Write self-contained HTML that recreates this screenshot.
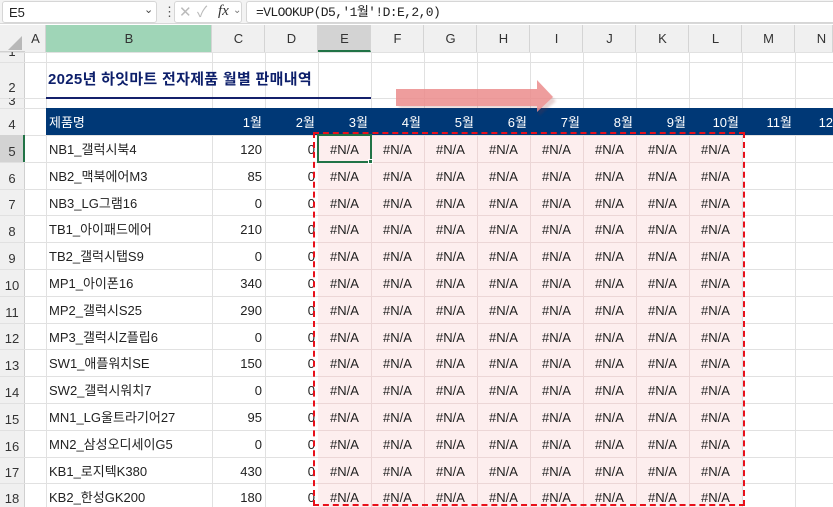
<!DOCTYPE html>
<html><head><meta charset="utf-8"><style>
*{margin:0;padding:0;box-sizing:border-box}
html,body{width:833px;height:507px;overflow:hidden}
body{background:#fff;font-family:"Liberation Sans","Noto Sans CJK KR",sans-serif;position:relative}
.a{position:absolute}
.t{position:absolute;font-size:13px;color:#222;white-space:nowrap;line-height:1}
</style></head><body>
<div class="a" style="left:0;top:0;width:833px;height:24px;background:#f3f3f3;border-bottom:1px solid #d8d8d8"></div>
<div class="a" style="left:2px;top:1px;width:155px;height:22px;background:#fff;border:1px solid #d6d6d6;border-radius:3px"></div>
<div class="t" style="left:9px;top:6px;font-size:13px">E5</div>
<div class="t" style="left:144px;top:5px;font-size:11px;color:#444">&#8964;</div>
<div class="t" style="left:163px;top:5px;font-size:13px;color:#555">&#8942;</div>
<div class="a" style="left:174px;top:1px;width:68px;height:22px;background:#fff;border:1px solid #d6d6d6;border-radius:3px"></div>
<div class="t" style="left:179px;top:5px;font-size:15px;color:#bbb">&#10005;</div>
<div class="t" style="left:197px;top:5px;font-size:15px;color:#bbb">&#10003;</div>
<div class="t" style="left:218px;top:4px;font-size:15px;font-style:italic;font-family:'Liberation Serif',serif;color:#333">fx</div>
<div class="t" style="left:233px;top:6px;font-size:10px;color:#777">&#8964;</div>
<div class="a" style="left:246px;top:1px;width:587px;height:22px;background:#fff;border:1px solid #d6d6d6;border-right:none;border-radius:3px 0 0 3px"></div>
<div class="t" style="left:256px;top:6px;font-size:13px;font-family:'Liberation Mono','Noto Sans CJK KR',monospace;letter-spacing:-0.6px">=VLOOKUP(D5,'1월'!D:E,2,0)</div>
<div id="g" style="position:absolute;left:0;top:0;width:833px;height:507px;overflow:hidden"></div>
<script>
(function(){
var g=document.getElementById('g'),h='';
var cx=[25,46,212,265,318,371,424,477,530,583,636,689,742,795,833];
var cn=['A','B','C','D','E','F','G','H','I','J','K','L','M','N'];
h+='<div class="a" style="left:0;top:25px;width:833px;height:27px;background:#f0f0f0;border-bottom:1px solid #d0d0d0"></div>';
h+='<div class="a" style="left:8px;top:36px;width:0;height:0;border-left:14px solid transparent;border-bottom:14px solid #b8b8b8"></div>';
for(var i=0;i<14;i++){var bg=i==1?'#9fd5b7':(i==4?'#d3d3d3':'#f0f0f0');var w=(i==13?53:cx[i+1]-cx[i]);
h+='<div class="a" style="left:'+cx[i]+'px;top:25px;width:'+(cx[i+1]-cx[i])+'px;height:27px;background:'+bg+';border-right:1px solid #d4d4d4;'+(i==4?'border-bottom:2px solid #217346':'')+'"></div>';
h+='<div class="t" style="left:'+cx[i]+'px;width:'+w+'px;text-align:center;top:32px;font-size:13px;color:#333">'+cn[i]+'</div>';}
var rt=[52,62,98,108,135],rh=26.8;
for(var r=6;r<=19;r++)rt.push(135+(r-5)*rh);
rt.push(507);
var rn=[1,2,3,4];for(var r=5;r<=18;r++)rn.push(r);
h+='<div class="a" style="left:0;top:52px;width:25px;height:455px;background:#f0f0f0;border-right:1px solid #d0d0d0"></div>';
for(var i=1;i<14;i++)h+='<div class="a" style="left:'+cx[i]+'px;top:52px;width:1px;height:455px;background:#e1e1e1"></div>';
for(var k=0;k<rt.length-1;k++){h+='<div class="a" style="left:0;top:'+Math.round(rt[k])+'px;width:833px;height:1px;background:#e1e1e1"></div>';}
h+='<div class="a" style="left:318px;top:136px;width:424px;height:371px;background:#fdeeee"></div>';
for(var i=5;i<12;i++)h+='<div class="a" style="left:'+cx[i]+'px;top:136px;width:1px;height:371px;background:#ecd6d6"></div>';
for(var k=5;k<rt.length-1;k++)h+='<div class="a" style="left:318px;top:'+Math.round(rt[k])+'px;width:424px;height:1px;background:#ecd6d6"></div>';
for(var k=0;k<rn.length;k++){var yt=rt[k],hh=rt[k+1]-yt;
if(k==4)h+='<div class="a" style="left:0;top:'+yt+'px;width:25px;height:'+hh+'px;background:#d3d3d3;border-right:2px solid #217346"></div>';
if(hh<15){h+='<div class="a" style="left:0;top:'+yt+'px;width:24px;height:'+hh+'px;overflow:hidden"><div class="t" style="left:0;width:24px;text-align:center;top:'+(k==0?-7:-4)+'px;font-size:13px;color:#333">'+rn[k]+'</div></div>';}
else h+='<div class="t" style="left:0;width:24px;text-align:center;top:'+(k==17?yt+9:yt+hh-17)+'px;font-size:13px;color:#333">'+rn[k]+'</div>';}
h+='<div class="t" style="left:48px;top:72px;font-size:15px;font-weight:bold;color:#0d1f6b;letter-spacing:0.3px">2025년 하잇마트 전자제품 월별 판매내역</div>';
h+='<div class="a" style="left:46px;top:97px;width:325px;height:2px;background:#14206b"></div>';
h+='<div class="a" style="left:46px;top:108px;width:787px;height:27px;background:#003876"></div>';
h+='<div class="t" style="left:49px;top:116px;color:#fff">제품명</div>';
var cr=[25,46,212,265,318,371,424,477,530,583,636,689,742,795,848];
for(var m=1;m<=12;m++){var c=m+1;var x=cr[c+1];h+='<div class="t" style="left:'+(x-56)+'px;width:53px;text-align:right;top:116px;color:#fff">'+m+'월</div>';}
var names=['NB1_갤럭시북4','NB2_맥북에어M3','NB3_LG그램16','TB1_아이패드에어','TB2_갤럭시탭S9','MP1_아이폰16','MP2_갤럭시S25','MP3_갤럭시Z플립6','SW1_애플워치SE','SW2_갤럭시워치7','MN1_LG울트라기어27','MN2_삼성오디세이G5','KB1_로지텍K380','KB2_한성GK200'];
var v=[120,85,0,210,0,340,290,0,150,0,95,0,430,180];
for(var k=0;k<14;k++){var y=rt[k+4]+8;
h+='<div class="t" style="left:49px;top:'+y+'px">'+names[k]+'</div>';
h+='<div class="t" style="left:212px;width:50px;text-align:right;top:'+y+'px">'+v[k]+'</div>';
h+='<div class="t" style="left:265px;width:50px;text-align:right;top:'+y+'px">0</div>';
for(var c=4;c<12;c++)h+='<div class="t" style="left:'+cx[c]+'px;width:53px;text-align:center;top:'+y+'px">#N/A</div>';}
h+='<div class="a" style="left:317px;top:134px;width:55px;height:29px;border:2px solid #217346"></div>';
h+='<div class="a" style="left:368px;top:159px;width:5px;height:5px;background:#217346;border:1px solid #fff"></div>';
h+='<div class="a" style="left:313px;top:132px;width:432px;height:374px;border:2px dashed #e8101a"></div>';
h+='<svg class="a" style="left:390px;top:76px" width="175" height="42"><defs><filter id="f"><feGaussianBlur stdDeviation="1.2"/></filter></defs><g opacity="0.85"><polygon points="8,16 148,16 148,7 165,23 148,38 148,30 8,30" fill="#8a3030" opacity="0.25" filter="url(#f)" transform="translate(1,2)"/><polygon points="6,13 147,13 147,4 163,21 147,36 147,30 6,30" fill="#ec8c8c"/></g></svg>';
g.innerHTML=h;
})();
</script>
</body></html>
